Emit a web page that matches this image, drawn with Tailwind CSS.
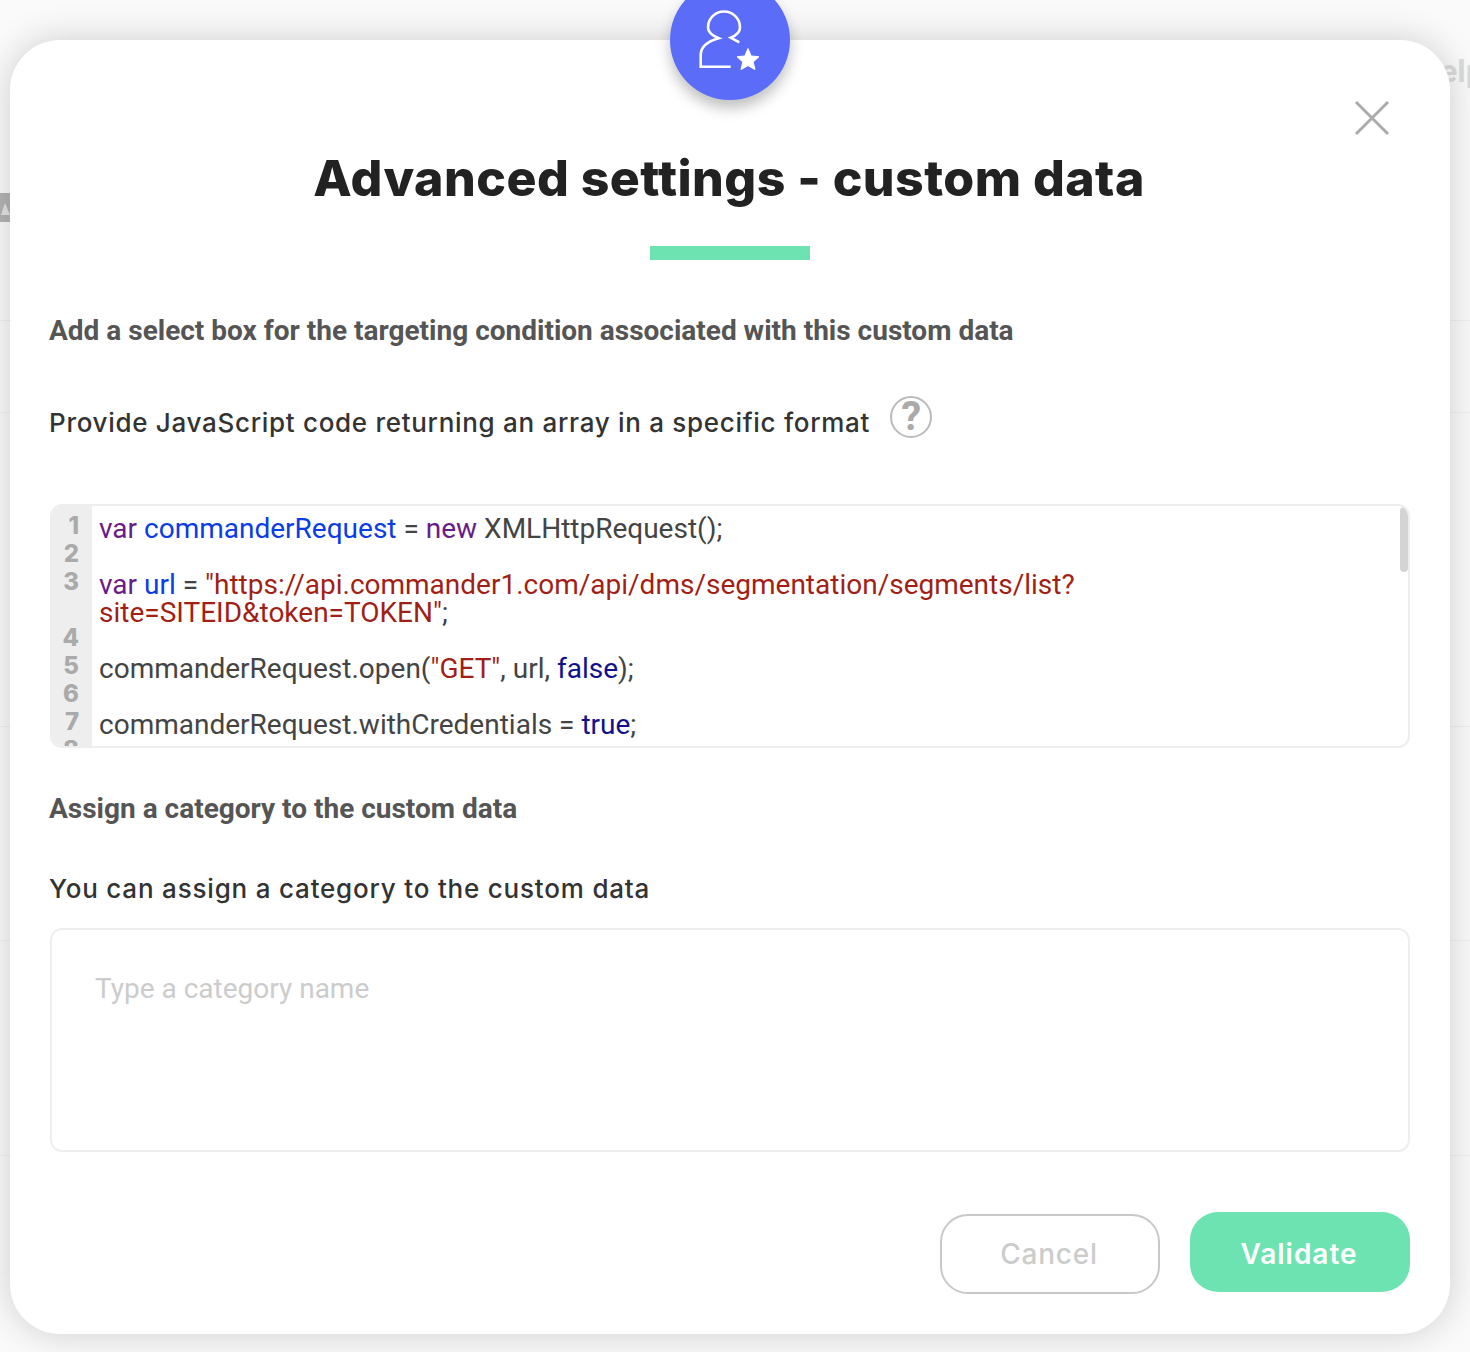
<!DOCTYPE html>
<html lang="en">
<head>
    <meta charset="UTF-8">
    <title>Advanced settings - custom data</title>
    <script src="https://cdn.jsdelivr.net/npm/@tailwindcss/browser@4"></script>
</head>
<body class="relative h-[1352px] w-[1470px] overflow-hidden bg-[#fafafa] font-['Roboto',sans-serif]">
    <!-- Page behind the modal -->
    <div class="absolute left-[1440px] top-[47px] text-[32px] font-bold text-[#dcdcdc] font-['Roboto',sans-serif]">elp</div>
    <svg class="absolute left-0 top-[193px]" width="10" height="29" viewBox="0 0 10 29">
        <path d="M0 0H10V29H0Z" fill="#b4b4b4"/>
        <path d="M5 10L10 22H1Z" fill="#e4e4e4"/>
    </svg>
    <div class="absolute left-0 top-[320px] h-px w-full bg-[#efefef]"></div>
    <div class="absolute left-0 top-[412px] h-px w-full bg-[#efefef]"></div>
    <div class="absolute left-0 top-[726px] h-px w-full bg-[#efefef]"></div>
    <div class="absolute left-0 top-[940px] h-px w-full bg-[#efefef]"></div>
    <div class="absolute left-0 top-[1155px] h-px w-full bg-[#efefef]"></div>

    <!-- Modal -->
    <div class="absolute left-[10px] top-[40px] flex h-[1294px] w-[1440px] flex-col rounded-[50px] bg-white px-[40px] shadow-[0_0_36px_rgba(0,0,0,0.18)]">
        <!-- Badge -->
        <div class="absolute left-[660px] top-[-60px] h-[120px] w-[120px] rounded-full bg-[#5a6cf8] shadow-[0_8px_14px_rgba(0,0,0,0.25)]">
            <svg width="120" height="120" viewBox="0 0 120 120" fill="none">
                <path d="M60.7 86.7H30.7V75C30.7 66 39 61 48.7 58.3C42 55.5 38 52 38 47.5A16 16 0 0 1 70 47.5C70 52 66 55.5 60.7 57.7L69.3 62.3" stroke="#fff" stroke-width="2.6"/>
                <path d="M78 68.5L81.2 76 89 76.7 83.2 82 85 89.6 78 85.6 71 89.6 72.8 82 67 76.7 74.8 76Z" fill="#fff" stroke="#fff" stroke-linejoin="round"/>
            </svg>
        </div>
        <!-- Close -->
        <svg class="absolute left-[1344px] top-[60px]" width="36" height="36" viewBox="0 0 36 36" fill="none">
            <path d="M2 2L34 34M34 2L2 34" stroke="#ababab" stroke-width="3"/>
        </svg>

        <h1 class="-ml-[2px] mt-[106px] text-center text-[50px] leading-[64px] font-extrabold tracking-[0.46px] text-[#222] font-['Inter',sans-serif]">Advanced settings - custom data</h1>
        <div class="mx-auto mt-[36px] h-[14px] w-[160px] bg-[#6ee3b2]"></div>

        <h2 class="-ml-px mt-[54px] text-[28px] leading-[34px] font-bold text-[#555]">Add a select box for the targeting condition associated with this custom data</h2>

        <div class="mt-[46px] flex h-[46px] items-center">
            <p class="-ml-px pt-[10px] text-[26px] font-medium tracking-[0.7px] text-[#333] font-['Inter',sans-serif]">Provide JavaScript code returning an array in a specific format</p>
            <div class="ml-[20px] flex h-[42px] w-[42px] items-center justify-center rounded-full border-2 border-[#bbb] text-[40px] font-bold leading-none text-[#aaa]">?</div>
        </div>

        <!-- Code editor -->
        <div class="relative mt-[64px] flex h-[244px] overflow-hidden rounded-[12px] border-2 border-[#eee]">
            <div class="w-[40px] shrink-0 bg-[#eee] pr-[13px] text-right text-[24px] leading-[28px] font-extrabold text-[#aaa] font-['Inter',sans-serif]">
                <div class="pt-[6px]">1</div>
                <div>2</div>
                <div class="h-[56px]">3</div>
                <div>4</div>
                <div>5</div>
                <div>6</div>
                <div>7</div>
                <div>8</div>
            </div>
            <div class="pl-[7px] pt-[9px] text-[28px] leading-[28px] text-[#444]">
                <div><span class="text-[#6a1b8a]">var</span> <span class="text-[#0a3ce8]">commanderRequest</span> = <span class="text-[#6a1b8a]">new</span> XMLHttpRequest();</div>
                <div class="h-[28px]"></div>
                <div><span class="text-[#6a1b8a]">var</span> <span class="text-[#0a3ce8]">url</span> = <span class="text-[#a11f16]">"https://api.commander1.com/api/dms/segmentation/segments/list?</span></div>
                <div><span class="text-[#a11f16]">site=SITEID&amp;token=TOKEN"</span>;</div>
                <div class="h-[28px]"></div>
                <div>commanderRequest.open(<span class="text-[#a11f16]">"GET"</span>, url, <span class="text-[#11118c]">false</span>);</div>
                <div class="h-[28px]"></div>
                <div>commanderRequest.withCredentials = <span class="text-[#11118c]">true</span>;</div>
            </div>
            <div class="absolute right-0 top-[1px] h-[65px] w-[8px] rounded-full bg-[#d4d4d4]"></div>
        </div>

        <h2 class="-ml-px mt-[44px] text-[28px] leading-[34px] font-bold text-[#555]">Assign a category to the custom data</h2>
        <p class="-ml-px mt-[45px] text-[26px] leading-[36px] font-medium tracking-[0.8px] text-[#333] font-['Inter',sans-serif]">You can assign a category to the custom data</p>

        <div class="mt-[21px] h-[224px] rounded-[12px] border-2 border-[#eee] pl-[43px] pt-[42px] text-[28px] leading-[34px] text-[#ccc]">Type a category name</div>

        <!-- Actions -->
        <div class="mt-[60px] flex items-start justify-end gap-[30px]">
            <button class="mt-[2px] h-[80px] w-[220px] rounded-[28px] border-2 border-[#c8c8c8] bg-white pr-[2px] text-[28px] font-medium tracking-[0.8px] text-[#ccc] font-['Inter',sans-serif]">Cancel</button>
            <button class="h-[80px] w-[220px] rounded-[28px] bg-[#6ee3b2] pr-[2px] pt-[4px] text-[28px] font-semibold tracking-[1px] text-white font-['Inter',sans-serif]">Validate</button>
        </div>
    </div>
</body>
</html>
